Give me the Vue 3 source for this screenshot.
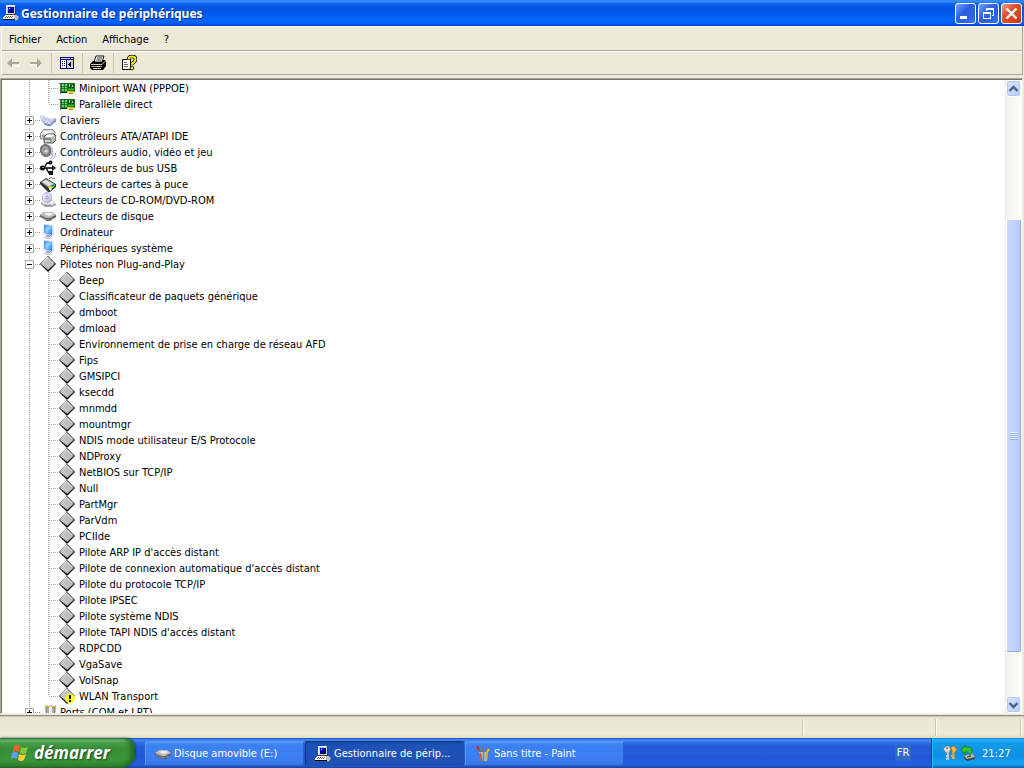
<script setup>
const adapters = ['Miniport WAN (PPPOE)', 'Parallèle direct']
const drivers = [
  'Beep',
  'Classificateur de paquets générique',
  'dmboot',
  'dmload',
  'Environnement de prise en charge de réseau AFD',
  'Fips',
  'GMSIPCI',
  'ksecdd',
  'mnmdd',
  'mountmgr',
  'NDIS mode utilisateur E/S Protocole',
  'NDProxy',
  'NetBIOS sur TCP/IP',
  'Null',
  'PartMgr',
  'ParVdm',
  'PCIIde',
  "Pilote ARP IP d'accès distant",
  "Pilote de connexion automatique d'accès distant",
  'Pilote du protocole TCP/IP',
  'Pilote IPSEC',
  'Pilote système NDIS',
  "Pilote TAPI NDIS d'accès distant",
  'RDPCDD',
  'VgaSave',
  'VolSnap',
  'WLAN Transport',
]
const nodes = [
  { children: adapters, childIcon: 'card' },
  { label: 'Claviers', icon: 'keyboard' },
  { label: 'Contrôleurs ATA/ATAPI IDE', icon: 'ide' },
  { label: 'Contrôleurs audio, vidéo et jeu', icon: 'audio' },
  { label: 'Contrôleurs de bus USB', icon: 'usb' },
  { label: 'Lecteurs de cartes à puce', icon: 'smartcard' },
  { label: 'Lecteurs de CD-ROM/DVD-ROM', icon: 'cdrom' },
  { label: 'Lecteurs de disque', icon: 'disk' },
  { label: 'Ordinateur', icon: 'monitor' },
  { label: 'Périphériques système', icon: 'monitor' },
  { label: 'Pilotes non Plug-and-Play', icon: 'diamond', children: drivers, childIcon: 'diamond' },
  { label: 'Ports (COM et LPT)', icon: 'port' },
]
const menus = ['Fichier', 'Action', 'Affichage', '?']
const tasks = [
  { label: 'Disque amovible (E:)', icon: 'disk' },
  { label: 'Gestionnaire de périp...', icon: 'computer', active: true },
  { label: 'Sans titre - Paint', icon: 'paint' },
]
const childIcon = (node, name) => (name === 'WLAN Transport' ? 'warning' : node.childIcon)
</script>

<template>
  <div class="screen">
    <svg class="defs" aria-hidden="true">
      <defs>
        <linearGradient id="g-screen" x1="0" y1="0" x2="1" y2="1">
          <stop offset="0" stop-color="#2f8cf0" /><stop offset="0.5" stop-color="#7cc4ff" /><stop offset="1" stop-color="#2070e0" />
        </linearGradient>
        <linearGradient id="g-disc" x1="0" y1="0" x2="1" y2="1">
          <stop offset="0" stop-color="#fff" /><stop offset="0.5" stop-color="#d9d6f6" /><stop offset="1" stop-color="#b0b4d4" />
        </linearGradient>
        <radialGradient id="g-cone">
          <stop offset="0" stop-color="#444" /><stop offset="0.5" stop-color="#aaa" /><stop offset="1" stop-color="#666" />
        </radialGradient>
      </defs>
      <symbol id="computer" viewBox="0 0 16 16">
        <g shape-rendering="crispEdges">
          <path d="M3 0h9v1h1v8h-1v1H3z" fill="#d4d0c8" /><path d="M3 0h9v1H4v8H3z" fill="#fff" />
          <path d="M12 1h1v9H3V9h9z" fill="#404040" />
          <path d="M5 2h6v6H5z" fill="#000084" /><path d="M5 2h4v3H5z" fill="#0000ff" /><path d="M6 3h1v1H6z" fill="#fff" />
          <path d="M2 10h11v1h1v3H0v-2h1v-1h1z" fill="#fff" />
          <path d="M3 11h1v1H3zM5 11h1v1H5zM7 11h1v1H7zM9 11h1v1H9zM2 12h1v1H2zM4 12h1v1H4zM6 12h1v1H6zM8 12h1v1H8z" fill="#606060" />
          <path d="M0 14h14v1H0z" fill="#000" />
          <path d="M11 10h3v1h1v3h-1v1h-2v-1h-1z" fill="#c0c0c0" /><path d="M15 11h1v3h-1v1h-1v1h-2v-1h2v-1h1z" fill="#808080" />
        </g>
      </symbol>
      <symbol id="card" viewBox="0 0 16 16">
        <g shape-rendering="crispEdges">
          <path d="M0 3h2v11H1V4H0z" fill="#606878" /><path d="M2 3h14v9H2z" fill="#0f7d1c" />
          <path d="M3 4h2v2H3zM6 4h2v2H6zM3 7h2v1H3zM6 7h2v1H6zM3 9h2v2H3zM6 9h2v2H6z" fill="#6fd06c" />
          <path d="M9 4h3v4H9zM13 4h2v4h-2z" fill="#064a10" /><path d="M10 4h1v3h-1zM13 5h1v2h-1z" fill="#a4e48c" />
          <path d="M9 9h6v1H9z" fill="#43b848" /><path d="M8 11h7v2H8z" fill="#e0cc30" /><path d="M10 13h4v1h-4z" fill="#a88c10" /><path d="M2 12h6v1H2z" fill="#033c0b" />
        </g>
      </symbol>
      <symbol id="keyboard" viewBox="0 0 16 16">
        <path d="M0 4l2-1 8 4 6-1v3l-6 5-5-1-4-5z" fill="#8d98cc" /><path d="M0 4l2-1 8 4 6-1-6 6-5-1-4-4z" fill="#dfe4f7" />
        <path d="M2 6l6 5M3 5l8 5M8 7l4 2M4 9l3-3M7 11l4-4M10 11l4-4" stroke="#a3acd8" stroke-width=".6" />
        <path d="M4 12l6 2 6-5" fill="none" stroke="#6774b0" stroke-width=".8" />
      </symbol>
      <symbol id="ide" viewBox="0 0 16 16">
        <path d="M.5 6l3-4.500h9L15 4v3l-3 4H.5z" fill="#d8d8d8" stroke="#777" stroke-width=".8" /><path d="M3 3h9l-2 3H1z" fill="#f6f6f6" /><path d="M2 8h5" stroke="#555" />
        <path d="M4 9l3-3h7l2 2v4l-3 3H4z" fill="#bbb" stroke="#333" stroke-width=".8" /><path d="M7 6.500h7L12 9H5z" fill="#fff" />
        <path d="M5 11h6" stroke="#444" /><path d="M5 13h7" stroke="#eee" /><path d="M10 13h2" stroke="#30a040" />
      </symbol>
      <symbol id="audio" viewBox="0 0 16 16">
        <path d="M5 0q7 0 8 6t-6 7z" fill="#b8b8bc" /><ellipse cx="5.500" cy="6.500" rx="5" ry="6" transform="rotate(-15 5.500 6.500)" fill="url(#g-cone)" stroke="#707078" />
        <circle cx="6" cy="7" r="1.700" fill="#e0e0e4" /><path d="M10 15q3-1 3-5M13 15q3-2 2.500-6" fill="none" stroke="#98a4f4" />
      </symbol>
      <symbol id="usb" viewBox="0 0 16 16">
        <path d="M1 8h12M4 8l3-5h3M6 8l3 5h2" fill="none" stroke="#000" stroke-width="1.400" />
        <circle cx="2.500" cy="8" r="2.500" /><path d="M12 5l4 3-4 3z" /><circle cx="10.500" cy="2.500" r="1.900" /><path d="M9 11h4v4H9z" />
        <path d="M2 7.500h2M10 2.500h1M10.500 13h1M13 8h1" stroke="#999" />
      </symbol>
      <symbol id="smartcard" viewBox="0 0 16 16">
        <path d="M0 6l6-4 10 6v3l-6 5h-2L0 8z" fill="#333" /><path d="M1 6l5-3 9 5-6 4z" fill="#a8a8a8" /><path d="M2 6l4-2 7 4-4 2z" fill="#e0e0e0" />
        <path d="M9 3l2-2 2 2 2-1" fill="none" stroke="#777" /><path d="M8 11l6-3 1 2-5 4z" fill="#f2d828" /><path d="M10 10l4-2 1 2-3 1z" fill="#10a0a8" /><path d="M9 12l3 1-2 2z" fill="#fff" />
      </symbol>
      <symbol id="cdrom" viewBox="0 0 16 16">
        <path d="M1 10l3-2h8l4 4v1l-4 2H5l-4-3z" fill="#a4a4ac" /><path d="M1 10l3-2h8l3 3-3 2H5z" fill="#ececf0" /><path d="M4 13h7" stroke="#777" stroke-width=".7" />
        <ellipse cx="7" cy="5.500" rx="4.800" ry="5.200" fill="url(#g-disc)" stroke="#a0a0c0" stroke-width=".7" /><path d="M7 5L5 1l3 0z" fill="#d4b8f0" opacity=".8" />
        <circle cx="7" cy="5.500" r="1.100" fill="#fff" stroke="#6878c8" stroke-width=".7" />
      </symbol>
      <symbol id="disk" viewBox="0 0 16 16">
        <path d="M0 7l4-3h8l4 3v2l-6 4H7L0 9z" fill="#606060" /><path d="M0 7l4-3h8l4 3-6 3H7z" fill="#bcbcbc" />
        <path d="M4 6l3-1h4l3 1-5 2z" fill="#f0f0f0" /><path d="M1 8.500l6 3h3" fill="none" stroke="#9a9a9a" stroke-width=".8" /><path d="M11 11l2-1" stroke="#5b5" />
      </symbol>
      <symbol id="monitor" viewBox="0 0 16 16">
        <path d="M4 0l9 1 1 10-5 1-6-2z" fill="#c9d6ec" /><path d="M4 1l8 1v9L4 9z" fill="url(#g-screen)" /><path d="M6 3l5 0-5 5z" fill="#a4dcff" opacity=".7" />
        <path d="M7 11h4l1 2-3 2-5-1z" fill="#98a4c0" /><path d="M5 13l4 1 2-2" fill="none" stroke="#e7ebf5" />
      </symbol>
      <symbol id="diamond" viewBox="0 0 16 16">
        <path d="M8 0l8 8-8 8-8-8z" fill="#000" /><path d="M8 1l7 7-7 6-7-6z" fill="#808080" />
        <path d="M7 1h1l6 6-6 6-7-5z" fill="#e8e8e8" /><path d="M8 2l6 6-6 5.500L2 8z" fill="#c0c0c0" />
      </symbol>
      <symbol id="warning" viewBox="0 0 16 16">
        <use href="#diamond" /><circle cx="11" cy="10.500" r="5" fill="#ff0" /><path d="M10 7h2v4h-2zM10 12h2v2h-2z" />
      </symbol>
      <symbol id="port" viewBox="0 0 16 16">
        <path d="M6 3h9v5l-2 3H8L6 8z" fill="#b0b0b0" stroke="#555" stroke-width=".8" /><path d="M9 3h3v6H9z" fill="#eee" />
        <path d="M5 1h11v2H5z" fill="#e8c820" /><path d="M6 1.500h9" stroke="#fff" stroke-dasharray="1 1" />
      </symbol>
      <symbol id="paint" viewBox="0 0 16 16">
        <path d="M6 8L3 2M8 8V2M10 8l4-6" stroke-width="1.600" fill="none" stroke="#9a6a38" /><path d="M2 0l2 4" stroke="#d02818" stroke-width="2" />
        <path d="M12 6l2-3" stroke="#f0c020" stroke-width="2" /><path d="M4 6h9l-1 9H6z" fill="#a8c0e0" />
        <path d="M5 7l2 8" stroke="#e04030" stroke-width="1.600" /><path d="M8.500 6v9" stroke="#50a840" stroke-width="1.600" /><path d="M12 6l-2 9" stroke="#e8a030" stroke-width="1.600" />
      </symbol>
    </svg>

    <header class="titlebar">
      <svg class="icon"><use href="#computer" /></svg>
      <h1>Gestionnaire de périphériques</h1>
      <button class="caption" aria-label="Réduire">
        <svg viewBox="0 0 21 21"><path d="M5 13h7v3H5z" fill="#fff" /></svg>
      </button>
      <button class="caption" aria-label="Restaurer">
        <svg viewBox="0 0 21 21" fill="none" stroke="#fff" shape-rendering="crispEdges"><path d="M8 6h8" stroke-width="2" /><path d="M8.500 5v3M15.500 5v8M14 12.500h2" /><path d="M5.500 9v6.500h7V9" /><path d="M5 10h8" stroke-width="2" /></svg>
      </button>
      <button class="caption close" aria-label="Fermer">
        <svg viewBox="0 0 21 21"><path d="M5.500 5.500l10 10M15.500 5.500l-10 10" stroke="#fff" stroke-width="2.400" /></svg>
      </button>
    </header>

    <div class="bars">
      <nav class="menubar">
        <button v-for="m in menus" :key="m">{{ m }}</button>
      </nav>
      <div class="toolbar">
        <button aria-label="Précédent">
          <svg class="icon" viewBox="0 0 16 16"><path d="M4 10l4 4v-3h6V9" fill="none" stroke="#fff" /><path d="M2 8l5-5v4h7v2H7v4z" fill="#aca899" /></svg>
        </button>
        <button aria-label="Suivant">
          <svg class="icon" viewBox="0 0 16 16"><path d="M2 10h7v4l5-5" fill="none" stroke="#fff" /><path d="M14 8L9 3v4H2v2h7v4z" fill="#aca899" /></svg>
        </button>
        <i></i>
        <button aria-label="Afficher l'arborescence">
          <svg class="icon" viewBox="0 0 16 16" shape-rendering="crispEdges"><path d="M1 2h14v12H1z" fill="#00007b" /><path d="M2 5h5v8H2z" fill="#fff" /><path d="M8 5h6v8H8z" fill="#d4d0c8" /><path d="M2 3h9v1H2zM12 3h2v1h-2z" fill="#d4d0c8" /><path d="M3 6h1v1H3zM5 6h1v1H5zM3 8h1v1H3zM5 8h1v1H5zM3 10h1v1H3zM5 10h1v1H5z" /><path d="M9 9h1V8h1V7h1v5h-1v-1h-1v-1H9z" /></svg>
        </button>
        <i></i>
        <button aria-label="Imprimer">
          <svg class="icon" viewBox="0 0 16 16"><path d="M4 7l2-6h8l-2 6z" fill="#fff" stroke="#000" stroke-width=".9" /><path d="M7 3h5M6.500 5h5" stroke="#000" stroke-width=".8" /><path d="M0 9l3-3h2v1h7l1-2h2l1 2v4l-3 4H2l-2-2z" fill="#000" /><path d="M1 9.500h11l3-3" fill="none" stroke="#c8c8c8" /><path d="M1 11h11v1H1z" fill="#a0a0a0" /><path d="M3 13.500h8" stroke="#d8d8d8" /><path d="M7 11h3v1H7z" fill="#ff0" /></svg>
        </button>
        <i></i>
        <button aria-label="Aide">
          <svg class="icon" viewBox="0 0 16 16"><path d="M1.500 4.500h8v10h-8z" fill="#fff" stroke="#000" /><path d="M3 7.500h3M3 9.500h4M3 11.500h4" stroke="#666" /><path d="M7.500 4.500q0-3 3.500-3t3.500 2.700-3.500 4.300v1" fill="none" stroke="#000" stroke-width="3.600" /><path d="M7.500 4.500q0-3 3.500-3t3.500 2.700-3.500 4.300v1" fill="none" stroke="#ffe820" stroke-width="2" /><circle cx="11" cy="13" r="1.800" fill="#ffe820" stroke="#000" stroke-width=".8" /></svg>
        </button>
      </div>
    </div>

    <main class="view">
      <ul class="tree">
        <li v-for="(n, i) in nodes" :key="i">
          <div v-if="n.label" class="row">
            <button class="toggle" :class="{ open: n.children }" :aria-label="n.label"></button>
            <span class="dots"></span>
            <svg class="icon"><use :href="'#' + n.icon" /></svg>
            <span class="label">{{ n.label }}</span>
          </div>
          <ul v-if="n.children" class="branch">
            <li v-for="c in n.children" :key="c" class="row">
              <span class="dots"></span>
              <svg class="icon"><use :href="'#' + childIcon(n, c)" /></svg>
              <span class="label">{{ c }}</span>
            </li>
          </ul>
        </li>
      </ul>
      <div class="scrollbar">
        <button aria-label="Monter"><svg viewBox="0 0 13 14"><path d="M2.500 9l4-4 4 4" /></svg></button>
        <div class="track">
          <div class="thumb"></div>
        </div>
        <button aria-label="Descendre"><svg viewBox="0 0 13 14"><path d="M2.500 5l4 4 4-4" /></svg></button>
      </div>
    </main>

    <div class="status"><span></span><span></span><span></span></div>

    <footer class="taskbar">
      <button class="start">
        <svg viewBox="0 0 20 20">
          <path d="M4 3q3-2 6 0L9 9Q6 7 3 9z" fill="#f0602c" /><path d="M11 4q3 2 7 0l-2 6q-3 2-6 0z" fill="#86c83c" />
          <path d="M2 10q3-2 6 0l-1 6q-3-2-6 0z" fill="#5b9bf0" /><path d="M9 11q3 2 7 0l-2 6q-3 2-6 0z" fill="#f8ce38" />
        </svg>
        <span>démarrer</span>
      </button>
      <div class="tasks">
        <button v-for="t in tasks" :key="t.label" class="task" :class="{ active: t.active }">
          <svg class="icon"><use :href="'#' + t.icon" /></svg>
          <span>{{ t.label }}</span>
        </button>
      </div>
      <span class="lang">FR</span>
      <div class="tray">
        <svg class="icon" viewBox="0 0 16 16"><path d="M1 4l3-3h3l2 3-2 4H4z" fill="#d8d8d8" stroke="#666" stroke-width=".6" /><path d="M9 2l3-1 3 3-2 4-3-1z" fill="#f4b848" stroke="#96600c" stroke-width=".6" /><path d="M4 3h2" stroke="#555" /><path d="M6 7v8M6 11H4M6 14H4" stroke="#ccc" stroke-width="1.800" /><path d="M11 7l1 7M11 11H9M12 13h-2" stroke="#f0a838" stroke-width="1.800" /></svg>
        <svg class="icon" viewBox="0 0 16 16"><path d="M4 11l8-3 3 4v2l-8 2-3-3z" fill="#444" /><path d="M4 11l8-3 3 4-8 2z" fill="#b8b8b8" /><path d="M7 12l4-1" stroke="#333" /><path d="M1 5l4-5v2q7-1 7 4l-2 5Q9 6 5 7v3z" fill="#38c038" stroke="#107018" stroke-width=".7" /></svg>
        <time>21:27</time>
      </div>
    </footer>
  </div>
</template>

<style>
html,
body {
  height: 100%;
  overflow: hidden;
}
#app {
  height: 100%;
}
</style>

<style scoped>
.screen {
  display: flex;
  flex-direction: column;
  height: 100vh;
  background: #ece9d8;
  font: 11px/16px "DejaVu Sans Condensed", "Noto Sans", sans-serif;
  color: #000;
}
.defs {
  position: absolute;
  width: 0;
  height: 0;
}
button {
  margin: 0;
  padding: 0;
  border: 0;
  background: none;
  font: inherit;
  color: inherit;
}
.icon {
  width: 16px;
  height: 16px;
  flex: none;
  display: block;
}
.titlebar {
  display: flex;
  align-items: center;
  height: 26px;
  gap: 2px;
  padding: 0 2px 0 3px;
  color: #fff;
  background: linear-gradient(#2a7ef0 0, #3a92ff 1px, #0a62f0 4px, #0054e3 8px, #0058ea 14px, #0566ff 20px, #0060f6 23px, #0040c4 26px);
}
.titlebar h1 {
  flex: 1;
  margin: 0;
  padding-top: 1px;
  font: bold 12px/18px "Noto Sans", sans-serif;
  text-shadow: 1px 1px #0a2a80;
}
.caption {
  box-sizing: border-box;
  width: 21px;
  height: 21px;
  border: 1px solid #fff;
  border-radius: 3px;
  background: linear-gradient(135deg, #7ca6f4, #2e62e4 40%, #2a60e6 70%, #3f78f4);
}
.caption.close {
  background: linear-gradient(135deg, #f0a088, #de5030 40%, #d8421c 75%, #c03808);
}
.caption svg {
  display: block;
  width: 21px;
  height: 21px;
  margin: -1px;
}
.bars {
  margin-right: 1px;
  border-right: 1px solid #aca899;
}
.menubar,
.toolbar {
  display: flex;
  box-sizing: border-box;
  height: 24px;
  margin-left: 1px;
  border-top: 1px solid #fff;
  border-left: 1px solid #fff;
  border-bottom: 1px solid #aca899;
}
.menubar {
  height: 25px;
  padding: 2px 0 0 7px;
  gap: 15px;
  align-items: center;
}
.toolbar {
  align-items: center;
  padding-left: 3px;
  gap: 7px;
}
.toolbar i {
  width: 1px;
  height: 20px;
  background: #c8c4b0;
}
.view {
  flex: 1;
  min-height: 0;
  display: flex;
  margin: 3px 1px 0 0;
  padding: 1px 0 0 1px;
  border: 1px solid #aca899;
  border-right-color: #f1efe2;
  border-bottom: 2px solid #f1efe2;
  box-shadow: inset 1px 1px #716f64;
  background: #fff;
  overflow: hidden;
}
ul {
  list-style: none;
  margin: 0;
  padding: 0;
}
.tree {
  flex: 1;
  position: relative;
  overflow: hidden;
  padding-left: 23px;
}
.tree::before,
.branch::before {
  content: "";
  position: absolute;
  width: 1px;
  background: repeating-linear-gradient(#aca899 0 1px, #fff 1px 2px);
}
.tree::before {
  left: 27px;
  top: 0;
  bottom: 0;
}
.branch {
  position: relative;
  padding-left: 23px;
}
.branch::before {
  left: 23px;
  top: 0;
  bottom: 8px;
}
.row {
  display: flex;
  align-items: center;
  height: 16px;
  white-space: nowrap;
}
.row .icon {
  margin-right: 4px;
}
.label {
  padding-top: 2px;
}
.dots {
  width: 6px;
  height: 1px;
  background: repeating-linear-gradient(90deg, #fff 0 1px, #aca899 1px 2px);
}
.branch .dots {
  width: 11px;
}
.toggle {
  position: relative;
  box-sizing: border-box;
  width: 9px;
  height: 9px;
  border: 1px solid #aca899;
  background: linear-gradient(#000, #000) 1px 3px / 5px 1px no-repeat, linear-gradient(#000, #000) 3px 1px / 1px 5px no-repeat, #fff;
}
.toggle.open {
  background: linear-gradient(#000, #000) 1px 3px / 5px 1px no-repeat, #fff;
}
.scrollbar {
  display: flex;
  flex-direction: column;
  width: 17px;
  background: linear-gradient(90deg, #eeede5 0 1px, #f3f1ec 1px, #fefefb);
}
.scrollbar button {
  flex: none;
  box-sizing: border-box;
  width: 15px;
  height: 17px;
  margin: 0 1px;
  border: 1px solid #fff;
  border-radius: 3px;
  background: linear-gradient(135deg, #d8e4ff, #b8cdfa);
  box-shadow: inset 0 0 0 1px #b4c8f6;
}
.scrollbar svg {
  display: block;
  width: 13px;
  height: 14px;
}
.scrollbar path {
  fill: none;
  stroke: #4d6185;
  stroke-width: 2.4;
}
.track {
  flex: 1;
  display: grid;
  grid-template-rows: 122fr 433fr 44fr;
}
.thumb {
  grid-row: 2;
  box-sizing: border-box;
  width: 15px;
  margin: 0 1px;
  border: 1px solid #fff;
  border-right-color: #98b0e8;
  border-bottom-color: #98b0e8;
  border-radius: 2px;
  background: repeating-linear-gradient(#eef4fe 0 1px, #8cb0f8 1px 2px) center / 7px 8px no-repeat, linear-gradient(90deg, #c9d8fc, #c2d3fd 60%, #b4c9fa);
}
.status {
  display: flex;
  box-sizing: border-box;
  height: 23px;
  padding: 3px 2px 2px 0;
  border-top: 1px solid #8c897c;
  box-shadow: inset 0 1px #d0ccbc;
  background: linear-gradient(#e2dfcc, #ece9d8 5px, #ece9d8 18px, #e0ddca);
}
.status span {
  border-right: 1px solid #fff;
  box-shadow: inset -1px 0 #c8c4b0;
  flex: 1;
}
.status span:nth-child(2) {
  flex: 0 0 132px;
}
.status span:nth-child(3) {
  flex: 0 0 84px;
}
.taskbar {
  display: flex;
  height: 30px;
  color: #fff;
  background: linear-gradient(#1f4fb8 0, #3f8cf0 2px, #3275e6 4px, #245edb 8px, #2157d7 20px, #2460e0 27px, #1941a5 30px);
}
.start {
  display: flex;
  align-items: center;
  gap: 4px;
  width: 135px;
  padding-left: 10px;
  margin-right: 10px;
  border-radius: 0 10px 14px 0;
  background: linear-gradient(#2d7a2d 0, #7cc07c 2px, #48a048 5px, #388e38 10px, #3a953a 22px, #2f842f 28px, #226522 30px);
  box-shadow: inset -4px 0 5px #236523, 1px 0 2px #173a8c;
  font: italic bold 17px/24px "Open Sans", "Noto Sans", sans-serif;
  text-shadow: 1px 1px 2px #1b401b;
}
.start svg {
  width: 20px;
  height: 20px;
}
.tasks {
  flex: 1;
  display: flex;
  gap: 1px;
  padding: 3px 0 2px;
}
.task {
  display: flex;
  align-items: center;
  gap: 3px;
  width: 159px;
  padding-left: 10px;
  border-radius: 2px;
  background: linear-gradient(#5a9cf8, #3c81f3 4px, #3b7df0 20px, #3270de);
  box-shadow: inset 1px 1px #5c9cfa, inset -1px -1px #2a62cc;
}
.task.active {
  background: linear-gradient(#163f94, #1e52b7 4px, #1e50b4);
  box-shadow: inset 1px 1px #123580;
}
.lang {
  align-self: center;
  width: 16px;
  margin-right: 20px;
  background: #316ac5;
  text-align: center;
}
.tray {
  display: flex;
  align-items: center;
  gap: 2px;
  box-sizing: border-box;
  width: 93px;
  padding-left: 10px;
  border-left: 1px solid #0c3c8c;
  background: linear-gradient(#0c7ad0 0, #28b4f8 2px, #149ce8 5px, #108ee6 18px, #14a4f0 26px, #0c60b8 30px);
  box-shadow: inset 1px 0 #1cc0ff;
}
.tray time {
  margin-left: 4px;
  padding-top: 1px;
}
</style>
